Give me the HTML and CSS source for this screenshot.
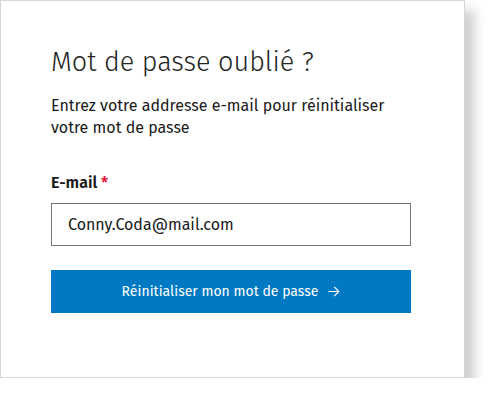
FILE: index.html
```html
<!DOCTYPE html>
<html lang="fr">
<head>
  <meta charset="UTF-8">
  <title>Mot de passe oublié</title>
  <link rel="stylesheet" href="styles.css">
</head>
<body>

  <div class="card">
    <h1>Mot de passe oublié ?</h1>
    <p class="intro">Entrez votre addresse e-mail pour réinitialiser votre mot de passe</p>

    <form class="reset-form">
      <label for="email">E-mail <span class="required">*</span></label>
      <input type="email" id="email" value="Conny.Coda@mail.com">
      <button type="submit" class="submit-btn">
        Réinitialiser mon mot de passe
        <svg width="12" height="11" viewBox="0 0 12 11" fill="none" stroke="#fff" stroke-width="1.2">
          <path d="M0.5 5.5h10.5M6.2 0.8l4.7 4.7-4.7 4.7"/>
        </svg>
      </button>
    </form>
  </div>

</body>
</html>
```

FILE: styles.css
```css
body {
  margin: 0;
  font-family: "Fira Sans", "Open Sans", sans-serif;
  background: #fff;
  color: #1a1a1a;
}

.card {
  box-sizing: border-box;
  width: 465px;
  height: 378px;
  padding: 44px 50px 0;
  border: 1px solid #d6d6d6;
  background: #fff;
  box-shadow: 10px 10px 10px rgba(0,0,0,0.18);
}

h1 {
  margin: 0;
  font-size: 27px;
  font-weight: 300;
  line-height: 34px;
  color: #222;
}

.intro {
  margin: 16px 0 0;
  font-size: 16px;
  line-height: 22px;
  max-width: 360px;
}

.reset-form {
  display: flex;
  flex-direction: column;
  width: 360px;
  margin-top: 33px;
}

label {
  font-size: 16px;
  font-weight: 600;
  line-height: 22px;
  margin-bottom: 9px;
}

.required {
  color: #e3173e;
}

input {
  box-sizing: border-box;
  height: 43px;
  padding: 0 16px;
  font-family: inherit;
  font-size: 16px;
  color: #1a1a1a;
  border: 1px solid #767676;
  border-radius: 0;
  outline: none;
}

.submit-btn {
  display: flex;
  align-items: center;
  justify-content: center;
  gap: 10px;
  height: 43px;
  margin-top: 24px;
  font-family: inherit;
  font-size: 14px;
  font-weight: 400;
  color: #fff;
  background: #0079c2;
  border: none;
  cursor: pointer;
}
```
